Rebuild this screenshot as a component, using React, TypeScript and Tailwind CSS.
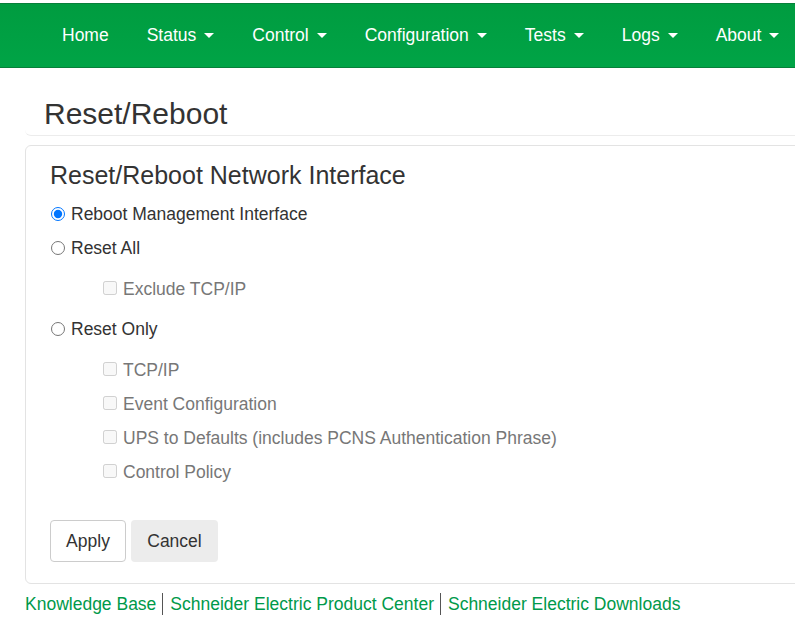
import { ReactNode } from "react";

const navItems = [
  { label: "Home", caret: false },
  { label: "Status", caret: true },
  { label: "Control", caret: true },
  { label: "Configuration", caret: true },
  { label: "Tests", caret: true },
  { label: "Logs", caret: true },
  { label: "About", caret: true },
];

function Caret() {
  return (
    <span className="ml-[8px] inline-block w-0 h-0 border-t-[5px] border-t-white border-x-[5px] border-x-transparent" />
  );
}

function CheckRow({ children }: { children: ReactNode }) {
  return (
    <label className="h-[34px] flex items-center pl-[53px] text-[#777]">
      <input type="checkbox" disabled className="m-0 w-[14px] h-[14px] -mt-[3px]" />
      <span className="ml-[6px]">{children}</span>
    </label>
  );
}

function RadioRow({ children, checked }: { children: ReactNode; checked?: boolean }) {
  return (
    <label className="h-[34px] flex items-center pl-[1px]">
      <input type="radio" name="reset" defaultChecked={checked} className="m-0 w-[14px] h-[14px] -mt-[1px]" />
      <span className="ml-[6px]">{children}</span>
    </label>
  );
}

export default function App() {
  return (
    <div
      className="w-[795px] h-[629px] overflow-hidden bg-white text-[#333] text-[17.5px] leading-[1.4]"
      style={{ fontFamily: '"Liberation Sans", Arial, sans-serif' }}
    >
      <nav className="mt-[3px] h-[65px] border-y border-[#07803a] bg-gradient-to-b from-[#009c40] to-[#00a446] flex items-center pl-[43px] text-white">
        {navItems.map((item) => (
          <div key={item.label} className="px-[19px] flex items-center">
            <span>{item.label}</span>
            {item.caret && <Caret />}
          </div>
        ))}
      </nav>

      <div className="ml-[25px] w-[800px]">
        <div className="h-[68px] border-b border-[#ececec] rounded-bl-md pl-[19px] pt-[29px]">
          <h1 className="text-[30px] leading-[33px]">Reset/Reboot</h1>
        </div>

        <div className="mt-[9px] border border-[#e3e3e3] rounded-md pt-[14px] pl-[24px] pb-[21px]">
          <h3 className="text-[25px] leading-[30px] mb-[7px]">Reset/Reboot Network Interface</h3>
          <RadioRow checked>Reboot Management Interface</RadioRow>
          <RadioRow>Reset All</RadioRow>
          <div className="mt-[7px]">
            <CheckRow>Exclude TCP/IP</CheckRow>
          </div>
          <div className="mt-[6px]">
            <RadioRow>Reset Only</RadioRow>
          </div>
          <div className="mt-[7px]">
            <CheckRow>TCP/IP</CheckRow>
            <CheckRow>Event Configuration</CheckRow>
            <CheckRow>UPS to Defaults (includes PCNS Authentication Phrase)</CheckRow>
            <CheckRow>Control Policy</CheckRow>
          </div>
          <div className="mt-[31px] flex gap-[5px]">
            <button className="h-[42px] w-[76px] border border-[#ccc] rounded-[4px] bg-white">Apply</button>
            <button className="h-[42px] w-[87px] rounded-[4px] bg-[#ececec]">Cancel</button>
          </div>
        </div>

        <div className="mt-[8px] flex items-center text-[#00994a]">
          <span>Knowledge Base</span>
          <span className="ml-[6px] mr-[7px] w-px h-[22px] bg-[#555]" />
          <span>Schneider Electric Product Center</span>
          <span className="ml-[6px] mr-[7px] w-px h-[22px] bg-[#555]" />
          <span>Schneider Electric Downloads</span>
        </div>
      </div>
    </div>
  );
}
